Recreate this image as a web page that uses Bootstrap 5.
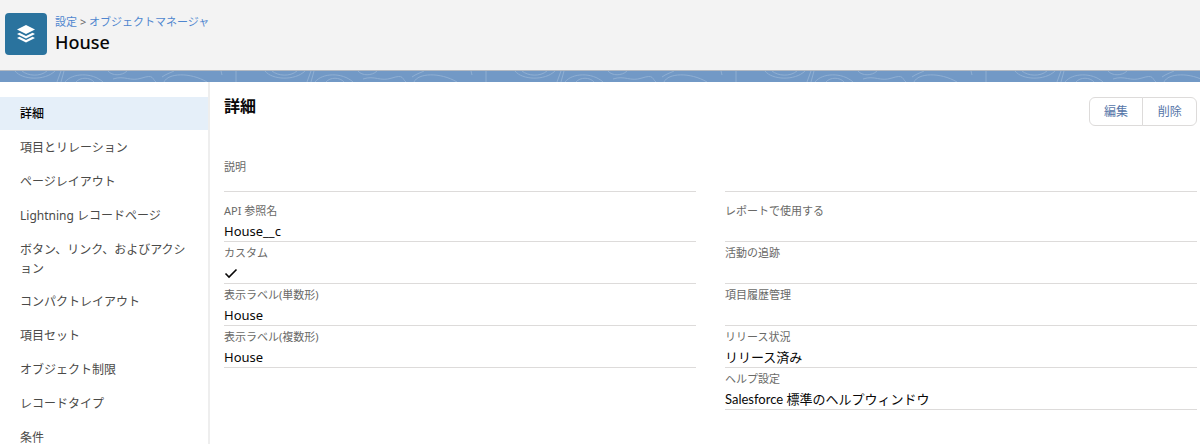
<!DOCTYPE html>
<html lang="ja"><head><meta charset="utf-8">
<link href="https://cdn.jsdelivr.net/npm/bootstrap@5.3.0/dist/css/bootstrap.min.css" rel="stylesheet">
<style>
html,body{height:444px;overflow:hidden;background:#fff}
body{font-family:"Noto Sans","Noto Sans CJK JP",sans-serif;color:#080707;font-size:13px}
.top-head{height:71px;background:#f3f3f3;border-bottom:1px solid #b4bac2;padding:13px 5px 0}
.obj-icon{width:42px;height:42px;background:#2a739e;border-radius:4px;flex:none}
.crumb{font-size:11px;line-height:16px;color:#4f86cf;margin-top:1px}
.crumb span{color:#666}
.obj-name{font-size:18px;line-height:24px;font-weight:500;margin-top:0}
.band{height:11px;display:block;width:100%}
.main-wrap{height:362px;overflow:hidden}
.side-col{width:210px;flex:none;border-right:2px solid #eeeeee;padding-top:15px;height:362px;overflow:hidden}
.side-item{padding:7.5px 20px;line-height:19px;font-size:12px;color:#4a4a48}
.side-item.on{background:#e5eff9;color:#080707;font-weight:500;padding-top:7px;padding-bottom:7px}
.side-item.wrap2{padding-bottom:6.5px}
.body-col{padding:0 3px 0 14px;min-width:0}
.sec-title{font-size:16px;line-height:24px;font-weight:700;margin:0;padding-top:12px}
.act-group{margin-top:15px}
.act-group .btn{font-size:12px;line-height:18px;padding:4px 14.3px;color:#5575a8;border:1px solid #dddbda;background:#fff;height:29px;--bs-border-radius:4px}
.cols{display:grid;grid-template-columns:472px 472px;column-gap:29px}
.fld{border-bottom:1px solid #dddbda;height:42px;padding-top:2px}
.fld.tall{height:48px;padding-top:14px;margin-top:18px}
.fld label{display:block;font-size:11px;line-height:18px;color:#696967;height:18px}
.fld div{font-size:13px;line-height:20px;color:#080707;margin-top:1px}
.fld div.sf-val{font-family:"Lato","Noto Sans CJK JP",sans-serif}
.spacer-row{height:8px;grid-column:1 / span 2}
.fld-stack{display:flex;flex-direction:column}
.chk{display:block;margin-top:4px}
</style></head><body>
<header class="top-head d-flex gap-2">
<div class="obj-icon d-flex align-items-center justify-content-center">
<svg width="20" height="20" viewBox="0 0 20 20" fill="#fff"><path d="M10 1 19 5.5 10 10 1 5.5Z"/><path d="M3.5 8.7 10 12 16.5 8.7 19 10 10 14.5 1 10Z"/><path d="M3.5 12.7 10 16 16.5 12.7 19 14 10 18.5 1 14Z"/></svg>
</div>
<div>
<div class="crumb">設定 <span>&gt;</span> オブジェクトマネージャ</div>
<div class="obj-name">House</div>
</div>
</header>
<svg class="band" width="1200" height="11">
<defs><pattern id="swirl" width="250" height="11" patternUnits="userSpaceOnUse">
<rect width="250" height="11" fill="#7299c6"/>
<g fill="none" stroke="#8fafd3" stroke-width="1">
<path d="M15 0C22 9 45 10 55 0M22 0C28 5 40 6 47 0"/>
<path d="M57 11 61 0M61 11 64 0"/>
<path d="M65 11C72 2 92 1 103 11M76 11C80 6 90 6 94 11"/>
<path d="M108 0C112 5 122 5 127 0"/>
<path d="M113 8C125 4 130 11 142 7S152 8 156 11"/>
<path d="M164 11C168 2 190 1 207 11M162 6C166 3 170 2 174 0"/>
<path d="M221 0 222 4M236 0V11"/>
</g></pattern></defs>
<rect width="1200" height="11" fill="url(#swirl)"/>
</svg>
<div class="main-wrap d-flex">
<nav class="side-col">
<div class="side-item on">詳細</div>
<div class="side-item">項目とリレーション</div>
<div class="side-item">ページレイアウト</div>
<div class="side-item">Lightning レコードページ</div>
<div class="side-item wrap2">ボタン、リンク、およびアクション</div>
<div class="side-item">コンパクトレイアウト</div>
<div class="side-item">項目セット</div>
<div class="side-item">オブジェクト制限</div>
<div class="side-item">レコードタイプ</div>
<div class="side-item">条件</div>
</nav>
<main class="body-col flex-grow-1">
<div class="d-flex justify-content-between align-items-start">
<h2 class="sec-title">詳細</h2>
<div class="btn-group act-group"><button class="btn" type="button">編集</button><button class="btn" type="button">削除</button></div>
</div>
<div class="cols">
<div class="fld tall"><label>説明</label></div><div class="fld tall"></div>
<div class="spacer-row"></div>
<div class="fld-stack">
<div class="fld"><label>API 参照名</label><div>House__c</div></div>
<div class="fld"><label>カスタム</label><div><svg class="chk" width="14" height="14" viewBox="0 0 14 14" fill="none" stroke="#080707" stroke-width="1.6"><path d="M1.5 7.5 5 11 12.5 3.5"/></svg></div></div>
<div class="fld"><label>表示ラベル(単数形)</label><div>House</div></div>
<div class="fld"><label>表示ラベル(複数形)</label><div>House</div></div>
</div>
<div class="fld-stack">
<div class="fld"><label>レポートで使用する</label></div>
<div class="fld"><label>活動の追跡</label></div>
<div class="fld"><label>項目履歴管理</label></div>
<div class="fld"><label>リリース状況</label><div>リリース済み</div></div>
<div class="fld"><label>ヘルプ設定</label><div class="sf-val">Salesforce 標準のヘルプウィンドウ</div></div>
</div>
</div>
</main>
</div>
</body></html>
